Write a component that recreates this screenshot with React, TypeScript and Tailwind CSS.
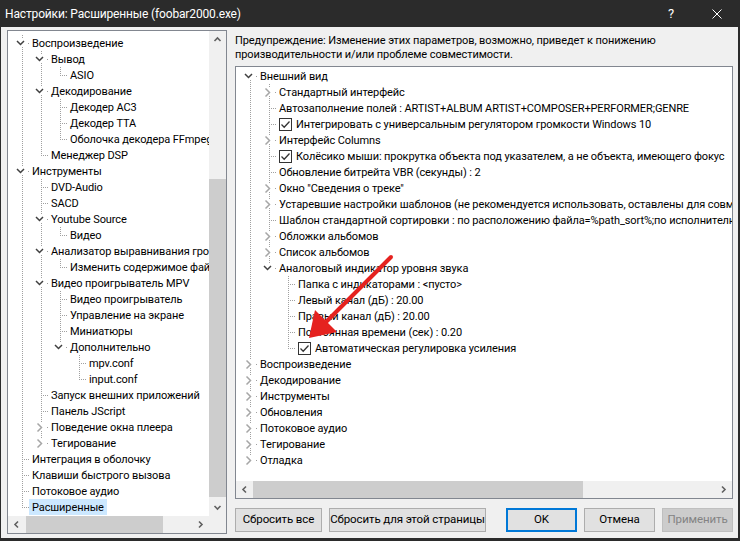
import React from 'react';

type Row = {
  label: string;
  level: number;
  kind: 'open' | 'closed' | 'leaf';
  check?: boolean;
  selected?: boolean;
};

const leftRows: Row[] = [
  { label: 'Воспроизведение', level: 0, kind: 'open' },
  { label: 'Вывод', level: 1, kind: 'open' },
  { label: 'ASIO', level: 2, kind: 'leaf' },
  { label: 'Декодирование', level: 1, kind: 'open' },
  { label: 'Декодер AC3', level: 2, kind: 'leaf' },
  { label: 'Декодер TTA', level: 2, kind: 'leaf' },
  { label: 'Оболочка декодера FFmpeg', level: 2, kind: 'leaf' },
  { label: 'Менеджер DSP', level: 1, kind: 'leaf' },
  { label: 'Инструменты', level: 0, kind: 'open' },
  { label: 'DVD-Audio', level: 1, kind: 'leaf' },
  { label: 'SACD', level: 1, kind: 'leaf' },
  { label: 'Youtube Source', level: 1, kind: 'open' },
  { label: 'Видео', level: 2, kind: 'leaf' },
  { label: 'Анализатор выравнивания громкости', level: 1, kind: 'open' },
  { label: 'Изменить содержимое файлов', level: 2, kind: 'leaf' },
  { label: 'Видео проигрыватель MPV', level: 1, kind: 'open' },
  { label: 'Видео проигрыватель', level: 2, kind: 'leaf' },
  { label: 'Управление на экране', level: 2, kind: 'leaf' },
  { label: 'Миниатюры', level: 2, kind: 'leaf' },
  { label: 'Дополнительно', level: 2, kind: 'open' },
  { label: 'mpv.conf', level: 3, kind: 'leaf' },
  { label: 'input.conf', level: 3, kind: 'leaf' },
  { label: 'Запуск внешних приложений', level: 1, kind: 'leaf' },
  { label: 'Панель JScript', level: 1, kind: 'leaf' },
  { label: 'Поведение окна плеера', level: 1, kind: 'closed' },
  { label: 'Тегирование', level: 1, kind: 'closed' },
  { label: 'Интеграция в оболочку', level: 0, kind: 'leaf' },
  { label: 'Клавиши быстрого вызова', level: 0, kind: 'leaf' },
  { label: 'Потоковое аудио', level: 0, kind: 'leaf' },
  { label: 'Расширенные', level: 0, kind: 'leaf', selected: true },
];

const rightRows: Row[] = [
  { label: 'Внешний вид', level: 0, kind: 'open' },
  { label: 'Стандартный интерфейс', level: 1, kind: 'closed' },
  { label: 'Автозаполнение полей : ARTIST+ALBUM ARTIST+COMPOSER+PERFORMER;GENRE', level: 1, kind: 'leaf' },
  { label: 'Интегрировать с универсальным регулятором громкости Windows 10', level: 1, kind: 'leaf', check: true },
  { label: 'Интерфейс Columns', level: 1, kind: 'closed' },
  { label: 'Колёсико мыши: прокрутка объекта под указателем, а не объекта, имеющего фокус', level: 1, kind: 'leaf', check: true },
  { label: 'Обновление битрейта VBR (секунды) : 2', level: 1, kind: 'leaf' },
  { label: 'Окно "Сведения о треке"', level: 1, kind: 'closed' },
  { label: 'Устаревшие настройки шаблонов (не рекомендуется использовать, оставлены для совместимости)', level: 1, kind: 'closed' },
  { label: 'Шаблон стандартной сортировки : по расположению файла=%path_sort%;по исполнителю', level: 1, kind: 'leaf' },
  { label: 'Обложки альбомов', level: 1, kind: 'closed' },
  { label: 'Список альбомов', level: 1, kind: 'closed' },
  { label: 'Аналоговый индикатор уровня звука', level: 1, kind: 'open' },
  { label: 'Папка с индикаторами : <пусто>', level: 2, kind: 'leaf' },
  { label: 'Левый канал (дБ) : 20.00', level: 2, kind: 'leaf' },
  { label: 'Правый канал (дБ) : 20.00', level: 2, kind: 'leaf' },
  { label: 'Постоянная времени (сек) : 0.20', level: 2, kind: 'leaf' },
  { label: 'Автоматическая регулировка усиления', level: 2, kind: 'leaf', check: true },
  { label: 'Воспроизведение', level: 0, kind: 'closed' },
  { label: 'Декодирование', level: 0, kind: 'closed' },
  { label: 'Инструменты', level: 0, kind: 'closed' },
  { label: 'Обновления', level: 0, kind: 'closed' },
  { label: 'Потоковое аудио', level: 0, kind: 'closed' },
  { label: 'Тегирование', level: 0, kind: 'closed' },
  { label: 'Отладка', level: 0, kind: 'closed' },
];

// does the item (or its ancestor) at `level` have another sibling further down
function hasNext(rows: Row[], i: number, level: number) {
  for (let j = i + 1; j < rows.length; j++) {
    if (rows[j].level < level) return false;
    if (rows[j].level === level) return true;
  }
  return false;
}

const DOT = '#a0a0a0';

function CheckBox() {
  return (
    <svg width="13" height="13" className="mr-[4px] shrink-0">
      <rect x="0.5" y="0.5" width="12" height="12" fill="#fff" stroke="#333" />
      <polyline points="2.5,6.5 5.2,9.2 10.5,3.5" fill="none" stroke="#333" strokeWidth="1.3" />
    </svg>
  );
}

function Tree({ rows, scrolled }: { rows: Row[]; scrolled: boolean }) {
  return (
    <>
      {rows.map((r, i) => {
        const L = r.level;
        const g = 21 + 19 * L;
        const lx = 14 + 19 * L + 0.5;
        const cx = 12.5 + 19 * L;
        const top = scrolled || i > 0;
        const next = hasNext(rows, i, L);
        const anc = Array.from({ length: L }, (_, a) => a).filter((a) => hasNext(rows, i, a));
        return (
          <div key={i} className="flex h-[16px] items-center whitespace-nowrap">
            <svg width={g} height={16} className="shrink-0" shapeRendering="crispEdges">
              {anc.map((a) => (
                <line key={a} x1={14 + 19 * a + 0.5} y1={0} x2={14 + 19 * a + 0.5} y2={16} stroke={DOT} strokeDasharray="1 1" />
              ))}
              {r.kind === 'leaf' ? (
                <>
                  {top && <line x1={lx} y1={0} x2={lx} y2={8} stroke={DOT} strokeDasharray="1 1" />}
                  {next && <line x1={lx} y1={8} x2={lx} y2={16} stroke={DOT} strokeDasharray="1 1" />}
                  <line x1={14 + 19 * L} y1={8.5} x2={21 + 19 * L} y2={8.5} stroke={DOT} strokeDasharray="1 1" />
                </>
              ) : (
                <>
                  {top && <line x1={lx} y1={0} x2={lx} y2={4} stroke={DOT} strokeDasharray="1 1" />}
                  {next && <line x1={lx} y1={12} x2={lx} y2={16} stroke={DOT} strokeDasharray="1 1" />}
                  <rect x={20 + 19 * L} y={8} width={1} height={1} fill={DOT} />
                </>
              )}
              {r.kind === 'open' && (
                <polyline
                  points={`${cx - 3.5},6 ${cx},9.5 ${cx + 3.5},6`}
                  fill="none"
                  stroke="#404040"
                  strokeWidth="1.5"
                  shapeRendering="geometricPrecision"
                />
              )}
              {r.kind === 'closed' && (
                <polyline
                  points={`${cx - 2},4.5 ${cx + 2},8.5 ${cx - 2},12.5`}
                  fill="none"
                  stroke="#a6a6a6"
                  strokeWidth="1.5"
                  shapeRendering="geometricPrecision"
                />
              )}
            </svg>
            <span className={`flex h-[16px] items-center px-[3px] ${r.selected ? 'bg-[#cce8ff]' : ''}`}>
              {r.check && <CheckBox />}
              <span className="relative top-[1px]">{r.label}</span>
            </span>
          </div>
        );
      })}
    </>
  );
}

function Arrow({ dir }: { dir: 'up' | 'down' | 'left' | 'right' }) {
  const pts = {
    up: '5.5,10 8.5,7 11.5,10',
    down: '5.5,7 8.5,10 11.5,7',
    left: '10,5.5 7,8.5 10,11.5',
    right: '7,5.5 10,8.5 7,11.5',
  }[dir];
  return (
    <svg width="17" height="17" className="shrink-0">
      <polyline points={pts} fill="none" stroke="#606060" strokeWidth="1.6" />
    </svg>
  );
}

function HScroll({ thumbLeft, thumbWidth }: { thumbLeft: number; thumbWidth: number }) {
  return (
    <div className="flex h-[17px] w-full shrink-0 items-center bg-[#f0f0f0]">
      <Arrow dir="left" />
      <div className="relative h-[17px] flex-1">
        <div className="absolute top-0 h-[17px] bg-[#cdcdcd]" style={{ left: thumbLeft, width: thumbWidth }} />
      </div>
      <Arrow dir="right" />
    </div>
  );
}

function Button({ children, w, variant }: { children: React.ReactNode; w: string; variant?: 'default' | 'disabled' }) {
  const base = 'h-[24px] whitespace-nowrap text-[11.5px] leading-none flex items-center justify-center';
  const look =
    variant === 'default'
      ? 'border-2 border-[#0078d7] bg-[#e1e1e1] text-black'
      : variant === 'disabled'
        ? 'border border-[#bfbfbf] bg-[#cccccc] text-[#838383]'
        : 'border border-[#adadad] bg-[#e1e1e1] text-black';
  return <button className={`${base} ${look} ${w}`}>{children}</button>;
}

export default function App() {
  return (
    <div className="relative h-[541px] w-[740px] overflow-hidden bg-[#2b2b2b] font-['Roboto',sans-serif] text-[11px] leading-[16px] tracking-[-0.1px] text-black">
      <div className="flex h-[27px] items-center text-[12px] tracking-[-0.15px] text-white">
        <span className="ml-[5px]">Настройки: Расширенные (foobar2000.exe)</span>
        <span className="ml-auto mr-[38px] text-[13px]">?</span>
        <svg width="10" height="10" className="mr-[18px]">
          <path d="M0.5 0.5 L9.5 9.5 M9.5 0.5 L0.5 9.5" stroke="#fff" strokeWidth="1" />
        </svg>
      </div>

      <div className="ml-[1px] flex h-[511px] w-[737px] bg-[#f0f0f0] pl-[6px] pt-[3px]">
        {/* левое дерево */}
        <div className="flex h-[504px] w-[220px] flex-col border border-[#828790] bg-white">
          <div className="flex h-[485px]">
            <div className="w-[201px] overflow-hidden pt-[4px]">
              <Tree rows={leftRows} scrolled />
            </div>
            <div className="flex w-[17px] flex-col bg-[#f0f0f0]">
              <Arrow dir="up" />
              <div className="h-[131px]" />
              <div className="h-[318px] bg-[#cdcdcd]" />
              <div className="flex-1" />
              <Arrow dir="down" />
            </div>
          </div>
          <div className="flex h-[17px]">
            <div className="w-[201px]">
              <HScroll thumbLeft={1} thumbWidth={137} />
            </div>
            <div className="w-[17px] bg-[#f0f0f0]" />
          </div>
        </div>

        {/* правая часть */}
        <div className="ml-[8px] flex w-[498px] flex-col">
          <p className="whitespace-nowrap pt-[4px] leading-[14px]">
            Предупреждение: Изменение этих параметров, возможно, приведет к понижению
            <br />
            производительности и/или проблеме совместимости.
          </p>
          <div className="mt-[4px] flex h-[433px] flex-col border border-[#828790] bg-white">
            <div className="min-h-0 flex-1 overflow-hidden pt-[1px]">
              <Tree rows={rightRows} scrolled={false} />
            </div>
            <HScroll thumbLeft={0} thumbWidth={330} />
          </div>
          <div className="mt-[9px] flex">
            <Button w="w-[87px]">Сбросить все</Button>
            <Button w="ml-[7px] w-[157px]">Сбросить для этой страницы</Button>
            <div className="flex-1" />
            <Button w="w-[71px]" variant="default">OK</Button>
            <Button w="ml-[7px] w-[71px]">Отмена</Button>
            <Button w="ml-[7px] w-[71px]" variant="disabled">Применить</Button>
          </div>
        </div>
      </div>

      {/* красная стрелка-указатель */}
      <svg className="pointer-events-none absolute left-0 top-0" width="740" height="541">
        <line x1="391" y1="257" x2="327" y2="321" stroke="#e5221f" strokeWidth="4" strokeLinecap="round" />
        <polygon points="309,338 315,310 337,332" fill="#e5221f" />
      </svg>
    </div>
  );
}
